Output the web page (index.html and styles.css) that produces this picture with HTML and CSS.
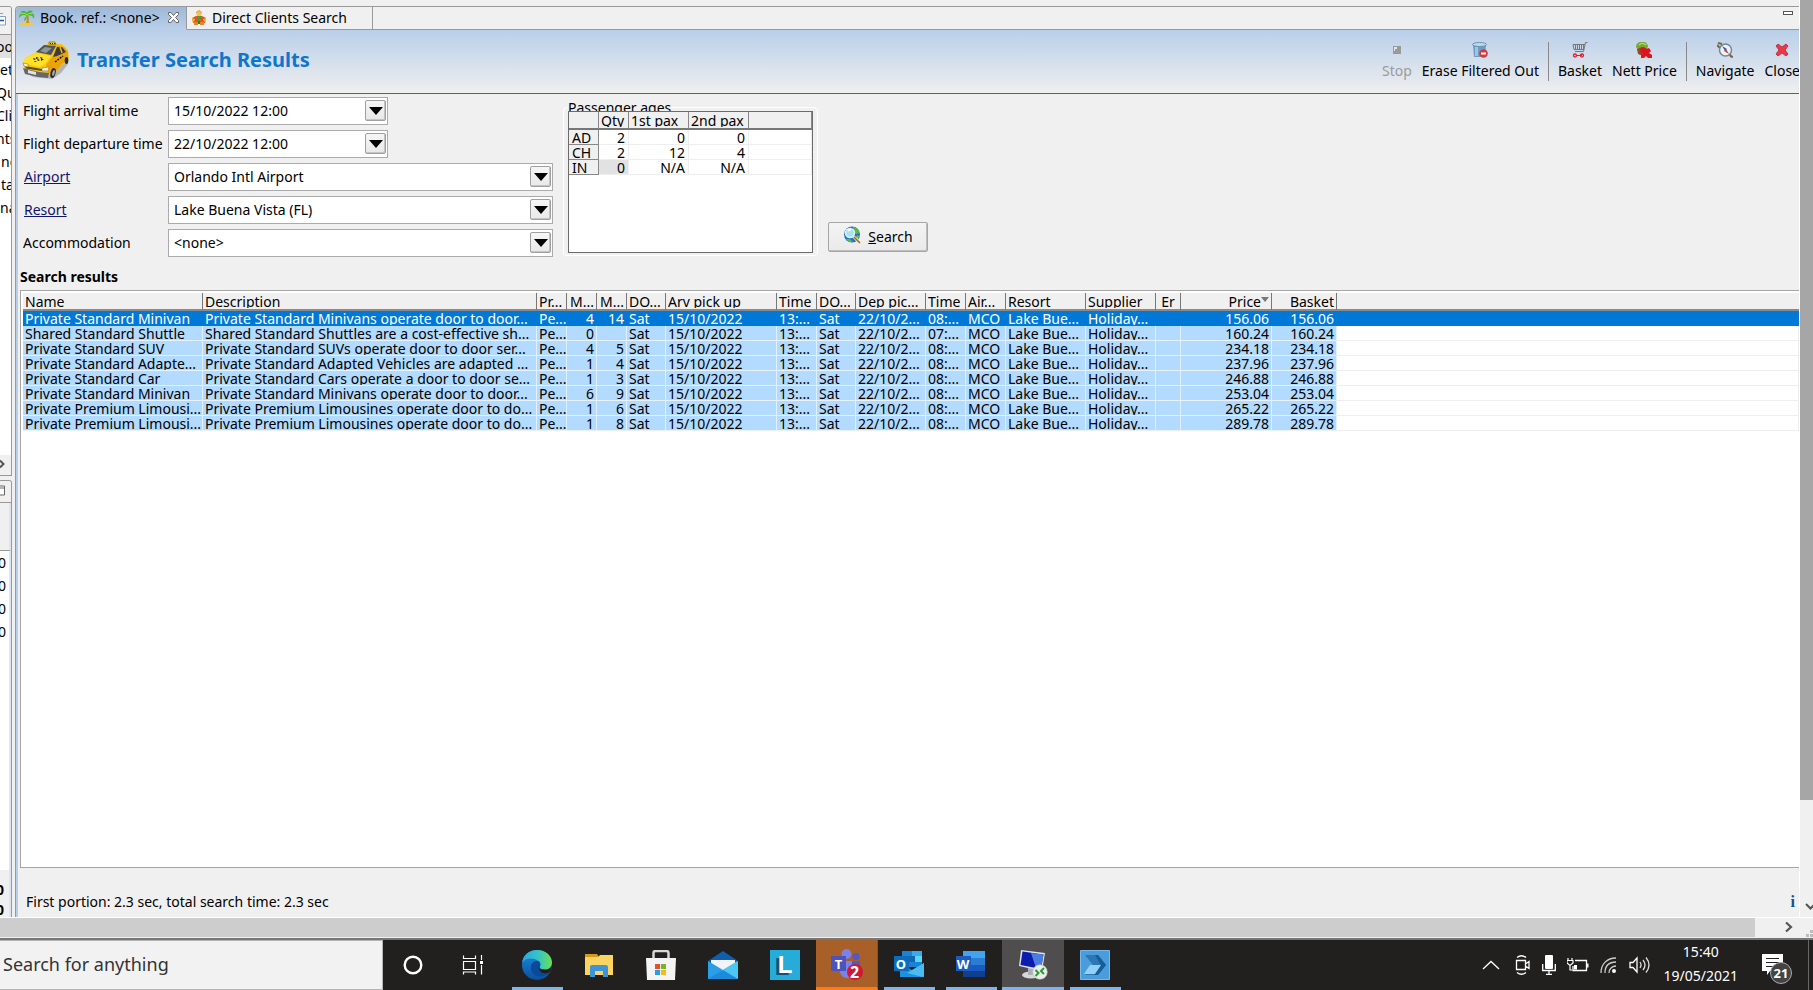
FILE: index.html
```html
<!DOCTYPE html>
<html lang="en">
<head>
<meta charset="utf-8">
<title>Transfer Search Results</title>
<link rel="stylesheet" href="styles.css">
</head>
<body>
<div class="remote">
  <div class="session">
    <aside class="side">
      <section class="side-panel side-top">
        <div class="side-tab"><svg width="7" height="16" viewBox="0 0 7 16"><path d="M0 1.500h3M0 4.500h5.500v8.500H0" fill="#fff" stroke="#7f9fc4"/><path d="M0 8.500h4" stroke="#1c4f9c" stroke-width="1.500"/></svg></div>
        <ul class="side-list">
          <li class="current cut">oo</li><li>ete</li><li class="cut">Qu</li><li class="cut">Cli</li><li class="cut">nts</li><li class="indent">ng</li><li class="indent">ta</li><li>na</li>
        </ul>
        <div class="side-scroll"><svg width="6" height="10" viewBox="0 0 6 10"><path d="M0 1.500 3.500 5 0 8.500" fill="none" stroke="#555" stroke-width="2"/></svg></div>
      </section>
      <section class="side-panel side-bottom">
        <div class="side-tab"><svg width="6" height="12" viewBox="0 0 6 12"><path d="M0 1h4.500v9H0M0 3h4" fill="#fff" stroke="#666"/></svg></div>
        <div class="side-head"></div>
        <ul class="side-nums"><li>0</li><li>0</li><li>0</li><li>0</li></ul>
        <div class="side-totals"><b>0</b><b>0</b></div>
      </section>
    </aside>

    <main class="editor">
      <div class="tabs" role="tablist">
        <button class="tab active" role="tab">
          <svg width="16" height="16" viewBox="0 0 16 16"><ellipse cx="8" cy="14" rx="7" ry="1.800" fill="#f5c93b"/><path d="M7 13c1-3 1-5 .5-7l2 0c.5 3 0 5 .5 7z" fill="#c98b1b"/><path d="M8 6C5 4 2 5 0 8c0-4 2-5 4-5-1-1-2-1-3 0 1-3 5-3 7 0 1-3 4-3 6-1-1 0-2 0-2 1 2 0 4 2 3 6-1-3-4-5-7-3 0 2-1 4-3 5 0-2 1-4 3-5z" fill="#4fb52c"/><path d="M2 4c2-1 4-1 6 1 2-2 4-2 5-1" stroke="#9be35c" fill="none"/></svg>
          <span>Book. ref.: &lt;none&gt;</span>
          <svg class="tab-x" width="11" height="11" viewBox="0 0 11 11"><path d="M.5.5h2.500l2.500 3 2.500-3h2.500v2l-3 3 3 3v2H8l-2.500-3-2.500 3H.5v-2l3-3-3-3z" fill="#fff" stroke="#666"/></svg>
        </button>
        <button class="tab" role="tab">
          <svg width="16" height="16" viewBox="0 0 16 16"><path d="M5 2l3-2 3 2-1 3H6z" fill="#e8a418"/><circle cx="8" cy="4" r="2.500" fill="#f7bd6b"/><path d="M1 8l4-2h6l4 2-1 5H2z" fill="#e2541e"/><path d="M6 6h4l-1 5H7z" fill="#4c9e35"/><path d="M1 8l3 1-1 3-2-1zM15 8l-3 1 1 3 2-1z" fill="#f3b033"/><path d="M3 12h4v3H3zM9 12h4v3H9z" fill="#e3862a"/><path d="M7 11h2v3H7z" fill="#357c2c"/></svg>
          <span>Direct Clients Search</span>
        </button>
        <div class="tab-space"><button class="minimize" aria-label="Minimize"></button></div>
      </div>

      <header class="banner">
        <svg class="taxi" width="48" height="38" viewBox="0 0 48 38">
          <path d="M3 31l8 5 19 2 9-6 7-9-3-1-14 5z" fill="#706f6a" opacity=".4"/>
          <path d="M1 22l2-5 10-5 7-6 7-4 13 1 6 6 1 8-2 5-5 2-5 6-6 5-8-1-15-3-4-4z" fill="#f7c610"/>
          <path d="M3 17l11-5 15 3-6 8-5 3-17-4z" fill="#ffe12a"/>
          <path d="M24 24l7-9 4-11 7 2 4 5 0 8-6 4-8 10-6-1z" fill="#eba30b"/>
          <path d="M14 11l8-7 12 1-5 9z" fill="#4e5559"/><path d="M18 10l5-4 7 1-6 5z" fill="#8d979b"/>
          <path d="M35 6l5 0 4 5-9 4-4 1z" fill="#373d40"/><path d="M38 6l2 6" stroke="#f2b516" stroke-width="1.500"/>
          <path d="M27 1l6 0 1 3-7-1z" fill="#ffe457" stroke="#8c6a12" stroke-width=".8"/><path d="M28 2.500h5" stroke="#222" stroke-dasharray="1 1"/>
          <path d="M1 27l16 4 10 1-1 5-10-1-13-3z" fill="#66696b"/><path d="M3 25l17 3v2L4 27.500z" fill="#5a4a1c"/>
          <path d="M1 22l5 1 0 3-4-1zM20 27l7-1-1 4-6 0z" fill="#f4f4e6" stroke="#a77b0c" stroke-width=".6"/>
          <path d="M6 29l8 2v3l-8-2z" fill="#dfe3e5"/>
          <ellipse cx="31" cy="32" rx="2.500" ry="5" fill="#26282a" transform="rotate(15 31 32)"/><ellipse cx="31.500" cy="32" rx="1.200" ry="3" fill="#a9adb0" transform="rotate(15 31.500 32)"/>
          <ellipse cx="44.500" cy="19.500" rx="1.800" ry="3.500" fill="#26282a"/>
          <path d="M11 17l3 1-2 1zM14 16l3 1-3 1zM15 18l3 1-2 1zM18 16l3 1-2 1zM19 18l3 0-3 2zM12 20l3 0-2 1z" fill="#181818"/><path d="M33 21l8-6" stroke="#181818" stroke-width="1.500" stroke-dasharray="2 1"/>
        </svg>
        <h1>Transfer Search Results</h1>
        <div class="tools">
          <button class="tool" disabled><svg width="16" height="16" viewBox="0 0 16 16"><path d="M4 4h8v8H4z" fill="#9a9a9a"/><path d="M5 5h3v2H6v2H5z" fill="#e4e4e4"/></svg>Stop</button>
          <button class="tool"><svg width="16" height="16" viewBox="0 0 16 16"><path d="M1 2.500h13L13 15H2z" fill="#6e9cc4"/><path d="M3 5h3v9H3z" fill="#9fc4df"/><ellipse cx="7.500" cy="2.500" rx="7" ry="2" fill="#bcd9ec" stroke="#5b84a8" stroke-width=".8"/><circle cx="11.500" cy="11.500" r="4.300" fill="#d33a3c"/><path d="M9 11.500h5" stroke="#fff" stroke-width="1.800"/></svg>Erase Filtered Out</button>
          <i class="sep"></i>
          <button class="tool"><svg width="16" height="16" viewBox="0 0 16 16" fill="none"><path d="M15.500.5h-2l-2 9H3M1 2.500h12M1 2.500l1 5h10M3.500 2.500v5M5.500 2.500v5M7.500 2.500v5M9.500 2.500v5M11.500 2.500v5" stroke="#777"/><path d="M4 13.500h6" stroke="#d22"/><circle cx="3" cy="13.500" r="1.500" stroke="#e0202a" stroke-width="1.300"/><circle cx="10" cy="13.500" r="1.500" stroke="#e0202a" stroke-width="1.300"/></svg>Basket</button>
          <button class="tool"><svg width="16" height="16" viewBox="0 0 16 16"><path d="M0 5c0-3 2-5 5-5h4c2 1 3 3 3 5L9 8H2z" fill="#77a832"/><path d="M3 3c2-2 5-2 7 0" stroke="#b8d76e" fill="none" stroke-width="1.500"/><path d="M1 7l5-2 6 2 0 5-5 2-5-2z" fill="#9b4925"/><path d="M5 6l3-1 2 2 3-1 2 3-2 2 3 2v3h-4l-2-2-2 2H5V13l2-2-3-1z" fill="#dc1420"/></svg>Nett Price</button>
          <i class="sep"></i>
          <button class="tool"><svg width="16" height="16" viewBox="0 0 16 16"><path d="M1 1l4 1M13 14l3 1M0 3l3 3M12 12l3 3" stroke="#7d633e" stroke-width="2"/><circle cx="8.500" cy="8" r="6" fill="#e9f3f9" stroke="#7a8790" stroke-width="1.500"/><path d="M5 4l5 3-2 2z" fill="#2463b4"/><path d="M12 12L7 9l2-2z" fill="#d73b32"/></svg>Navigate</button>
          <button class="tool"><svg width="16" height="16" viewBox="0 0 16 16"><path d="M2 4l2-2 4 3 4-3 2 2-3 4 3 4-2 2-4-3-4 3-2-2 3-4z" fill="#e83a48" stroke="#b9222f" stroke-width=".8"/></svg>Close</button>
        </div>
      </header>

      <form class="criteria" onsubmit="return false">
        <div class="fields">
          <label for="arr">Flight arrival time</label>
          <div class="combo short"><select id="arr"><option>15/10/2022 12:00</option></select><span class="drop"></span></div>
          <label for="dep">Flight departure time</label>
          <div class="combo short"><select id="dep"><option>22/10/2022 12:00</option></select><span class="drop"></span></div>
          <a href="#airport">Airport</a>
          <div class="combo"><select id="airport" aria-label="Airport"><option>Orlando Intl Airport</option></select><span class="drop"></span></div>
          <a href="#resort">Resort</a>
          <div class="combo"><select id="resort" aria-label="Resort"><option>Lake Buena Vista (FL)</option></select><span class="drop"></span></div>
          <label for="acc">Accommodation</label>
          <div class="combo"><select id="acc"><option>&lt;none&gt;</option></select><span class="drop"></span></div>
        </div>
        <div class="pax" role="group" aria-labelledby="pax-title">
          <div class="pax-title" id="pax-title">Passenger ages</div>
          <div class="pax-frame">
            <div class="pax-box">
              <table class="ages">
                <colgroup><col class="w30"><col class="w30"><col class="w60"><col class="w60"><col></colgroup>
                <thead><tr><th></th><th><div>Qty</div></th><th><div>1st pax</div></th><th><div>2nd pax</div></th><th></th></tr></thead>
                <tbody>
                  <tr><th><div>AD</div></th><td><div>2</div></td><td><div>0</div></td><td><div>0</div></td><td></td></tr>
                  <tr><th><div>CH</div></th><td><div>2</div></td><td><div>12</div></td><td><div>4</div></td><td></td></tr>
                  <tr><th><div>IN</div></th><td class="off"><div>0</div></td><td><div>N/A</div></td><td><div>N/A</div></td><td></td></tr>
                </tbody>
              </table>
            </div>
          </div>
        </div>
        <button class="search-btn" type="submit">
          <svg width="18" height="18" viewBox="0 0 18 18"><circle cx="9" cy="8.500" r="8" fill="#1d74c4"/><path d="M10 1c4 0 6 3 6.500 6l-3 1-3-2zM3 13l4 0 3 3c-3 1-6-1-7-3z" fill="#62b544"/><path d="M14 9l2 1-1 4-3 1z" fill="#86bf3b"/><circle cx="7" cy="7" r="4.500" fill="#a8e2ef" stroke="#e2f4fa" stroke-width="1.500"/><path d="M5 5c1-1 2-1 3-1" stroke="#fff" stroke-width="1.500"/><path d="M10.500 10.500l6 6" stroke="#f4e6c5" stroke-width="3"/><path d="M11 11l6 6" stroke="#9a6a2a" stroke-width="1.500"/></svg>
          <span><u>S</u>earch</span>
        </button>
      </form>

      <h2>Search results</h2>
      <section class="results">
        <table class="grid">
          <colgroup><col class="c180"><col class="c334"><col class="w30"><col class="w30"><col class="w30"><col class="c39"><col class="c111"><col class="c40"><col class="c39"><col class="c70"><col class="c40"><col class="c40"><col class="c80"><col class="c70"><col class="c25"><col class="c91"><col class="c65"><col></colgroup>
          <thead><tr><th><div>Name</div></th><th><div>Description</div></th><th><div>Pr...</div></th><th class="n"><div>M...</div></th><th class="n"><div>M...</div></th><th><div>DO...</div></th><th><div>Arv pick up</div></th><th><div>Time</div></th><th><div>DO...</div></th><th><div>Dep pic...</div></th><th><div>Time</div></th><th><div>Air...</div></th><th><div>Resort</div></th><th><div>Supplier</div></th><th class="c"><div>Er</div></th><th class="n sorted"><div>Price<i></i></div></th><th class="n"><div>Basket</div></th><th></th></tr></thead>
          <tbody>
            <tr class="selected"><td><div>Private Standard Minivan</div></td><td><div>Private Standard Minivans operate door to door...</div></td><td><div>Pe...</div></td><td class="n"><div>4</div></td><td class="n"><div>14</div></td><td><div>Sat</div></td><td><div>15/10/2022</div></td><td><div>13:...</div></td><td><div>Sat</div></td><td><div>22/10/2...</div></td><td><div>08:...</div></td><td><div>MCO</div></td><td><div>Lake Bue...</div></td><td><div>Holiday...</div></td><td></td><td class="n"><div>156.06</div></td><td class="n"><div>156.06</div></td><td></td></tr>
            <tr><td><div>Shared Standard Shuttle</div></td><td><div>Shared Standard Shuttles are a cost-effective sh...</div></td><td><div>Pe...</div></td><td class="n"><div>0</div></td><td></td><td><div>Sat</div></td><td><div>15/10/2022</div></td><td><div>13:...</div></td><td><div>Sat</div></td><td><div>22/10/2...</div></td><td><div>07:...</div></td><td><div>MCO</div></td><td><div>Lake Bue...</div></td><td><div>Holiday...</div></td><td></td><td class="n"><div>160.24</div></td><td class="n"><div>160.24</div></td><td></td></tr>
            <tr><td><div>Private Standard SUV</div></td><td><div>Private Standard SUVs operate door to door ser...</div></td><td><div>Pe...</div></td><td class="n"><div>4</div></td><td class="n"><div>5</div></td><td><div>Sat</div></td><td><div>15/10/2022</div></td><td><div>13:...</div></td><td><div>Sat</div></td><td><div>22/10/2...</div></td><td><div>08:...</div></td><td><div>MCO</div></td><td><div>Lake Bue...</div></td><td><div>Holiday...</div></td><td></td><td class="n"><div>234.18</div></td><td class="n"><div>234.18</div></td><td></td></tr>
            <tr><td><div>Private Standard Adapte...</div></td><td><div>Private Standard Adapted Vehicles are adapted ...</div></td><td><div>Pe...</div></td><td class="n"><div>1</div></td><td class="n"><div>4</div></td><td><div>Sat</div></td><td><div>15/10/2022</div></td><td><div>13:...</div></td><td><div>Sat</div></td><td><div>22/10/2...</div></td><td><div>08:...</div></td><td><div>MCO</div></td><td><div>Lake Bue...</div></td><td><div>Holiday...</div></td><td></td><td class="n"><div>237.96</div></td><td class="n"><div>237.96</div></td><td></td></tr>
            <tr><td><div>Private Standard Car</div></td><td><div>Private Standard Cars operate a door to door se...</div></td><td><div>Pe...</div></td><td class="n"><div>1</div></td><td class="n"><div>3</div></td><td><div>Sat</div></td><td><div>15/10/2022</div></td><td><div>13:...</div></td><td><div>Sat</div></td><td><div>22/10/2...</div></td><td><div>08:...</div></td><td><div>MCO</div></td><td><div>Lake Bue...</div></td><td><div>Holiday...</div></td><td></td><td class="n"><div>246.88</div></td><td class="n"><div>246.88</div></td><td></td></tr>
            <tr><td><div>Private Standard Minivan</div></td><td><div>Private Standard Minivans operate door to door...</div></td><td><div>Pe...</div></td><td class="n"><div>6</div></td><td class="n"><div>9</div></td><td><div>Sat</div></td><td><div>15/10/2022</div></td><td><div>13:...</div></td><td><div>Sat</div></td><td><div>22/10/2...</div></td><td><div>08:...</div></td><td><div>MCO</div></td><td><div>Lake Bue...</div></td><td><div>Holiday...</div></td><td></td><td class="n"><div>253.04</div></td><td class="n"><div>253.04</div></td><td></td></tr>
            <tr><td><div>Private Premium Limousi...</div></td><td><div>Private Premium Limousines operate door to do...</div></td><td><div>Pe...</div></td><td class="n"><div>1</div></td><td class="n"><div>6</div></td><td><div>Sat</div></td><td><div>15/10/2022</div></td><td><div>13:...</div></td><td><div>Sat</div></td><td><div>22/10/2...</div></td><td><div>08:...</div></td><td><div>MCO</div></td><td><div>Lake Bue...</div></td><td><div>Holiday...</div></td><td></td><td class="n"><div>265.22</div></td><td class="n"><div>265.22</div></td><td></td></tr>
            <tr><td><div>Private Premium Limousi...</div></td><td><div>Private Premium Limousines operate door to do...</div></td><td><div>Pe...</div></td><td class="n"><div>1</div></td><td class="n"><div>8</div></td><td><div>Sat</div></td><td><div>15/10/2022</div></td><td><div>13:...</div></td><td><div>Sat</div></td><td><div>22/10/2...</div></td><td><div>08:...</div></td><td><div>MCO</div></td><td><div>Lake Bue...</div></td><td><div>Holiday...</div></td><td></td><td class="n"><div>289.78</div></td><td class="n"><div>289.78</div></td><td></td></tr>
          </tbody>
        </table>
      </section>
      <footer class="status"><span>First portion: 2.3 sec, total search time: 2.3 sec</span><b class="info">i</b></footer>
    </main>

    <div class="vbar"><div class="vthumb"></div><svg width="13" height="10" viewBox="0 0 13 10"><path d="M6 2l4.500 4.500L15 2" fill="none" stroke="#555" stroke-width="2"/></svg></div>
  </div>
  <div class="hbar"><div class="hthumb"></div><svg width="10" height="12" viewBox="0 0 10 12"><path d="M2 1.500l5 4.500-5 4.500" fill="none" stroke="#555" stroke-width="2.200"/></svg><svg class="grip" width="8" height="8" viewBox="0 0 8 8"><path d="M0 5h3v3H0zM4 5h3v3H4zM4 1h3v3H4z" fill="#bbb"/></svg></div>
</div>

<nav class="taskbar">
  <input class="find" type="text" aria-label="Search" placeholder="Search for anything">
  <div class="apps">
    <button class="app plain" aria-label="Cortana"><svg width="20" height="20" viewBox="0 0 20 20"><circle cx="10" cy="10" r="8.300" fill="none" stroke="#fff" stroke-width="2.400"/></svg></button>
    <button class="app view" aria-label="Task View"><svg width="22" height="20" viewBox="0 0 22 20"><path d="M1.500.5v3h12v-3M1.500 6.500h12v8h-12zM1.500 19.500v-2.500h12v2.500M19.500 0v5M19.500 10v9.500" fill="none" stroke="#fff" stroke-width="1.200"/><path d="M18 6h3v3h-3z" fill="#fff"/></svg></button>
    <button class="app open" aria-label="Edge"><svg width="30" height="30" viewBox="0 0 30 30"><defs><linearGradient id="e1" x2="1"><stop stop-color="#2ba5e0"/><stop offset=".55" stop-color="#35c6c2"/><stop offset="1" stop-color="#6be04f"/></linearGradient><linearGradient id="e2" y2="1" x2="0"><stop stop-color="#1b8fe0"/><stop offset="1" stop-color="#0c4f9e"/></linearGradient></defs><circle cx="15" cy="15" r="15" fill="url(#e2)"/><path d="M0 13C1 5 7 0 15 0c9 0 15 6 15 12.500 0 4.500-3.500 7-7 7-4 0-5.500-1.500-5-3 1-1.500.8-3-.2-4.500C14 7.500 3 7 0 13z" fill="url(#e1)"/><path d="M17.800 12.500C15 9 8 12 9 19c1 5 5 8 10 7.500 4-.5 7-2 8.500-4-3 2-9 1.500-10.500-2-.8-2 1.300-3 1-5z" fill="#0b4a98"/><path d="M30 15c-1 4-5 5.500-8 4.500-4 0-5.500-1.500-4.500-3.500-2 4 1 7.500 6 7.500 2 0 4-.8 5-2 1-2 1.500-4 1.500-6.500z" fill="#221f1f"/></svg></button>
    <button class="app" aria-label="File Explorer"><svg width="28" height="24" viewBox="0 0 28 24"><path d="M0 1h12l2 3H0z" fill="#d99a1c"/><path d="M0 4h13l2-2h13v20H0z" fill="#fcd462"/><path d="M5 24V14q0-2 2-2h14q2 0 2 2v10h-5v-6h-8v6z" fill="#3b95d8"/></svg></button>
    <button class="app" aria-label="Store"><svg width="30" height="30" viewBox="0 0 30 30"><path d="M7.500 9V3q0-2 2-2h11q2 0 2 2v6" fill="none" stroke="#d8d8d8" stroke-width="2.500"/><path d="M0 8h30l-1 22H1z" fill="#f4f4f4"/><path d="M9 14h5v5H9z" fill="#e8502a"/><path d="M15 14h5v5h-5z" fill="#7ab51d"/><path d="M9 20h5v5H9z" fill="#2a9fe0"/><path d="M15 20h5v5h-5z" fill="#f7b916"/></svg></button>
    <button class="app" aria-label="Mail"><svg width="30" height="28" viewBox="0 0 30 28"><path d="M0 10L15 0l15 10v4H0z" fill="#0f5fae"/><path d="M3 9h24v8L15 21 3 17z" fill="#f3f3f5"/><path d="M0 10l15 9 15-9v18H0z" fill="#2a9fe8"/><path d="M30 10L13 20l17 8z" fill="#4cc7f4"/><path d="M0 28L15 19l15 9z" fill="#1c8bdc"/></svg></button>
    <button class="app" aria-label="Lexicon"><span class="ltile">L</span></button>
    <button class="app teams" aria-label="Teams"><span class="office"><svg width="32" height="32" viewBox="0 0 32 32"><circle cx="15.500" cy="5" r="5" fill="#7b83e8"/><circle cx="25" cy="7.500" r="3.500" fill="#5059c9"/><path d="M9 12h14v10c0 5-3 7-7 7s-7-3-7-7z" fill="#7b83e8"/><path d="M21 12h8v8c0 4-4 6-8 4z" fill="#5059c9"/><path d="M0 7h15v15H0z" fill="#4b53bc"/><circle cx="24" cy="23" r="8" fill="#cf1738"/></svg><span class="letter">T</span><span class="count">2</span></span></button>
    <button class="app open" aria-label="Outlook"><span class="office"><svg width="32" height="32" viewBox="0 0 32 32"><path d="M9 2h20v16H9z" fill="#1a83d6"/><path d="M19 2h10v6H19z" fill="#3aa9ee"/><path d="M16 7h6v6h-6z" fill="#1068b5"/><path d="M22 7h7v6h-7z" fill="#59d6fb"/><path d="M7 14l12 7 12-7v13q0 1-1 1H7z" fill="#1d91dd"/><path d="M31 14L14 24l16 4q1 0 1-1z" fill="#49bdf0"/><path d="M1 7h15v15H1z" fill="#0f6cbd"/></svg><span class="letter">O</span></span></button>
    <button class="app open" aria-label="Word"><span class="office"><svg width="32" height="32" viewBox="0 0 32 32"><path d="M8 2h22v7H8z" fill="#41a5ee"/><path d="M8 9h22v7H8z" fill="#2b7cd3"/><path d="M8 16h22v6H8z" fill="#185abd"/><path d="M8 22h22v6H8z" fill="#103f91"/><path d="M1 7h15v15H1z" fill="#1b5cbe"/></svg><span class="letter">W</span></span></button>
    <button class="app open current" aria-label="Remote Desktop"><svg width="30" height="30" viewBox="0 0 30 30"><ellipse cx="13" cy="25" rx="9" ry="3.500" fill="#d6d8da"/><path d="M10 18h6v7h-6z" fill="#aab0b5"/><path d="M3 0l24 3-3 18L1 16z" fill="#dfe2e5"/><path d="M4.500 1.500l21 3-2.500 14.500L2.500 15z" fill="#0c1cae"/><path d="M13 3l12.500 1.500L23 19l-5-1z" fill="#4b7ce0"/><circle cx="22" cy="22" r="7.300" fill="#eceeed" stroke="#bbb" stroke-width=".6"/><path d="M17.500 20l3 3-3 3M26 18l-3 3 3 3" fill="none" stroke="#2c9b34" stroke-width="2"/></svg></button>
    <button class="app open" aria-label="Power Automate"><svg width="30" height="30" viewBox="0 0 30 30"><path d="M.5.5h29v29H.5z" fill="#4b9cdb" stroke="#79baea"/><path d="M5 5h13l8 10-8 10H5l8-10z" fill="#2d77b5"/><path d="M18 5l8 10-8 10H14l7-10-6-10z" fill="#155e97"/><path d="M10 15h11l-6 9H4z" fill="#93d0f5"/></svg></button>
  </div>
  <div class="tray">
    <svg class="more" width="18" height="10" viewBox="0 0 18 10"><path d="M1 9l8-7.500L17 9" fill="none" stroke="#fff" stroke-width="1.300"/></svg>
    <svg width="16" height="20" viewBox="0 0 16 20"><path d="M1.500 5.500h9v9h-9zM10.500 9l3.500-2.500v7L10.500 11M2 2.500q4.500-3.500 9 0M2 17.500q4.500 3.500 9 0" fill="none" stroke="#fff" stroke-width="1.300"/></svg>
    <svg width="14" height="20" viewBox="0 0 14 20"><rect x="3" y="0" width="8" height="14" rx="1" fill="#fff"/><path d="M.7 9v6.500h12.600V9M7 15v4M4 19.300h6" fill="none" stroke="#fff" stroke-width="1.300"/></svg>
    <svg width="22" height="16" viewBox="0 0 22 16"><path d="M8 3.500h11.500v10H6V9" fill="none" stroke="#fff" stroke-width="1.300"/><path d="M20 6.500h1.500v4H20zM7 8h3v4.500H7z" fill="#fff"/><path d="M1 1v2M5 1v2M0 3.500h6V6L3 8.500 0 6zM3 8v5h2" fill="none" stroke="#fff" stroke-width="1.200"/></svg>
    <svg width="18" height="18" viewBox="0 0 18 18"><path d="M1 17C1 8 7 2 16 2M5 17C5 10 9 6 16 6M9 17c0-4 3-7 7-7" fill="none" stroke="#ccc" stroke-width="1.300"/><circle cx="14" cy="15" r="2" fill="#fff"/></svg>
    <svg width="22" height="18" viewBox="0 0 22 18"><path d="M1 6.500h3l4-4.500v14l-4-4.500H1z" fill="none" stroke="#fff" stroke-width="1.300"/><path d="M11 6q2 3 0 6M14 4q4 5 0 10M17 1.500q6 7.500 0 15" fill="none" stroke="#ddd" stroke-width="1.300"/></svg>
    <div class="clock"><span>15:40</span><span>19/05/2021</span></div>
    <button class="notes" aria-label="Notifications"><svg width="22" height="22" viewBox="0 0 22 22"><path d="M0 0h21v17H8l-3 4v-4H0z" fill="#fff"/><path d="M4 4.500h13M4 8.500h13M4 12.500h7" stroke="#222" stroke-width="1.200"/></svg><span class="badge">21</span></button>
    <i class="peek"></i>
  </div>
</nav>
</body>
</html>
```
FILE: styles.css
```css
* { box-sizing: border-box; }
body {
  margin: 0;
  height: 100vh;
  display: flex;
  flex-direction: column;
  overflow: hidden;
  background: #f0f0f0;
  color: #000;
  font: 14px/20px "Noto Sans", "Liberation Sans", sans-serif;
}
button, select, input { font: inherit; color: inherit; margin: 0; padding: 0; border: 0; border-radius: 0; background: none; }
h1, h2, ul { margin: 0; padding: 0; }
li { list-style: none; }
svg { display: block; flex: none; }

.remote { flex: 1; min-height: 0; display: flex; flex-direction: column; }
.session { flex: 1; min-height: 0; display: flex; }

/* sliver of the left-hand views */
.side { width: 12px; flex: none; display: flex; flex-direction: column; gap: 4px; padding-top: 6px; overflow: hidden; }
.side-panel { display: flex; flex-direction: column; border: 1px solid #999; border-left: 0; background: #fff; overflow: hidden; }
.side-top { height: 470px; flex: none; border-top-right-radius: 3px; }
.side-bottom { flex: 1; border-bottom: 0; border-top-right-radius: 3px; }
.side-tab { height: 28px; flex: none; padding-top: 5px; background: #f0f0f0; border-bottom: 1px solid #999; }
.side-bottom .side-tab { height: 22px; padding-top: 4px; }
.side-list { flex: 1; line-height: 23px; }
.side-list li { height: 23px; overflow: hidden; }
.side-list .cut { text-indent: -4px; }
.side-list .indent { padding-left: 1px; }
.side-list .current { background: #e0e0e0; }
.side-scroll { height: 20px; padding-top: 4px; background: #f0f0f0; }
.side-head, .side-nums, .side-totals { border-right: 2px solid #dce6f2; }
.side-head { height: 48px; flex: none; background: #f0f0f0; border-bottom: 1px solid #999; }
.side-nums { flex: 1; line-height: 23px; }
.side-nums li { text-indent: -2px; }
.side-totals { height: 47px; padding-top: 10px; background: #f0f0f0; line-height: 20px; overflow: hidden; }
.side-totals b { display: block; text-indent: -4px; }

/* editor */
.editor {
  flex: 1;
  min-width: 0;
  display: flex;
  flex-direction: column;
  margin: 6px 0 0 3px;
  border: 1px solid #999;
  border-width: 1px 0 0 1px;
  border-top-left-radius: 4px;
  box-shadow: inset 2px 0 #b9cfe7;
  overflow: hidden;
  padding-left: 2px;
}
.tabs { display: flex; height: 23px; flex: none; margin-left: -2px; }
.tab { display: flex; align-items: center; gap: 5px; width: 186px; padding: 0 4px; border: 1px solid #999; border-width: 0 1px 1px 0; white-space: nowrap; }
.tab.active { width: 171px; padding-left: 3px; background: linear-gradient(#9db8d8, #b9cfe9); border-bottom-color: #b9cfe9; border-top-left-radius: 4px; }
.tab-x { margin: 0 0 2px 3px; }
.tab-space { flex: 1; display: flex; justify-content: flex-end; border-bottom: 1px solid #999; }
.minimize { width: 10px; height: 4px; margin: 4px 6px 0 0; border: 1px solid #555; background: #fff; }

.banner { display: flex; align-items: center; height: 64px; flex: none; padding-left: 6px; background: linear-gradient(#b9cfe9, #efefef); border-bottom: 1px solid #2a6fa5; margin-left: -2px; white-space: nowrap; }
.taxi { margin-bottom: 3px; }
h1 { flex: 1; margin: 0 0 3px 7px; color: #0f76cc; font: bold 20px/28px "Noto Sans", "Liberation Sans", sans-serif; }
.tools { display: flex; align-items: center; margin-right: -6px; }
.tool { display: flex; flex-direction: column; align-items: center; gap: 3px; padding: 0 5px; }
.tool:disabled { color: #9b9b9b; }
.sep { width: 1px; height: 39px; margin: 0 4px; background: #888; }

/* search criteria */
.criteria { display: flex; flex: none; height: 170px; padding: 3px 0 0 5px; }
.fields { display: grid; grid-template-columns: 145px 385px; grid-auto-rows: 28px; row-gap: 5px; align-items: center; align-content: start; white-space: nowrap; }
.fields a { color: #14146e; justify-self: start; padding-left: 1px; }
.combo { display: grid; grid-template-columns: 1fr 25px; height: 28px; border: 1px solid #ababab; background: #fff; }
.combo.short { width: 220px; }
.combo select { grid-area: 1 / 1 / 2 / 3; appearance: none; width: 100%; padding-left: 5px; outline: 0; }
.drop { grid-area: 1 / 2; width: 21px; height: 21px; margin: 2px 0 0 3px; display: grid; place-items: center; border: 1px solid #a0a0a0; border-radius: 2px; background: linear-gradient(#f6f6f6, #e8e8e8); box-shadow: inset -1px -1px #c4c4c4; pointer-events: none; }
.drop::after { content: ""; border: 7px solid transparent; border-top: 8px solid #000; border-bottom: 0; }

.pax { width: 255px; margin-left: 10px; }
.pax-title { position: relative; z-index: 1; width: fit-content; height: 13px; margin: 1px 0 -4px 5px; line-height: 20px; background: #f0f0f0; overflow: hidden; }
.pax-frame { height: 149px; padding: 3px 4px 4px; border: 1px solid #fff; border-radius: 4px; }
.pax-box { height: 142px; border: 1px solid #6b6b6b; background: #fff; }
table { table-layout: fixed; border-collapse: separate; border-spacing: 0; width: 100%; white-space: nowrap; }
th, td { padding: 0; font-weight: normal; text-align: left; vertical-align: top; }
th div, td div { overflow: hidden; line-height: 15px; height: 14px; padding: 0 3px; }
.ages tr { height: 15px; }
.ages thead tr { height: 18px; }
.ages th { background: #f0f0f0; border: 1px solid #888; border-width: 0 1px 1px 0; }
.ages thead th { border-bottom: 2px solid #777; }
.ages thead div, .grid thead div { height: 15px; margin-bottom: 1px; padding: 0 2px; line-height: 18px; }
.ages td { text-align: right; border: 1px solid #eee; border-width: 0 1px 1px 0; }
.ages .off { background: #e2e2e2; }
.w30 { width: 30px; }
.w60 { width: 60px; }

.search-btn { display: flex; align-items: center; justify-content: center; gap: 7px; width: 100px; height: 30px; margin: 125px 0 0 10px; border: 1px solid #a6a6a6; border-radius: 2px; background: linear-gradient(#f3f3f3, #eaeaea); box-shadow: inset -1px -1px #bdbdbd; }
.search-btn svg { margin-bottom: 4px; }

h2 { height: 26px; flex: none; padding: 3px 0 0 2px; font: bold 14px/20px "Noto Sans", sans-serif; }
.results { flex: 1; min-height: 0; margin-left: 2px; padding: 2px 0 0 2px; border: 1px solid #a5a5a5; border-right: 0; background: #fff; overflow: hidden; }
.grid thead tr { height: 18px; }
.grid thead th { background: #f0f0f0; border-right: 1px solid #777; border-bottom: 2px solid #8a8a8a; }
.grid thead th:last-child { border-right: 0; }
.grid td { height: 15px; background: #b3dbff; border-right: 1px solid #dff0ff; border-bottom: 1px solid #e6f2fc; }
.grid td div { padding: 0 2px; }
.grid td:last-child { background: #fff; border-color: #eee; }
.grid .selected td, .grid .selected td:last-child { background: #0078d7; color: #fff; border-color: #0078d7; }
.grid .n { text-align: right; }
.grid .c { text-align: center; }
.sorted i { display: inline-block; vertical-align: 5px; border: 4px solid transparent; border-top: 5px solid #777; border-bottom: 0; }
.c180 { width: 180px; }
.c334 { width: 334px; }
.c39 { width: 39px; }
.c111 { width: 111px; }
.c40 { width: 40px; }
.c70 { width: 70px; }
.c80 { width: 80px; }
.c25 { width: 25px; }
.c91 { width: 91px; }
.c65 { width: 65px; }

.status { display: flex; align-items: center; justify-content: space-between; height: 49px; flex: none; padding: 19px 4px 0 8px; }
.info { color: #14508c; font: bold 16px/20px "Liberation Serif", serif; }

.vbar { width: 14px; flex: none; display: flex; flex-direction: column; border-left: 1px solid #fff; }
.vthumb { flex: 1; margin-bottom: 102px; background: #a6a6a6; }
.vbar svg { margin-bottom: 5px; }
.hbar { display: flex; align-items: flex-start; height: 23px; flex: none; border-top: 1px solid #fff; border-bottom: 2px solid #777; }
.hthumb { flex: 1; height: 19px; background: #cdcdcd; }
.hbar svg { margin: 3px 12px 0 29px; }
.hbar .grip { margin: 11px -1px 0 0; }

/* taskbar */
.taskbar { display: flex; height: 50px; flex: none; background: #221f1f; color: #fff; }
.find { width: 383px; height: 50px; padding: 0 0 2px 3px; border: 1px solid #b5b5b5; border-left: 0; background: #f2f2f2; color: #333; font-size: 18px; }
.find::placeholder { color: #333; opacity: 1; }
.apps { display: flex; flex: 1; }
.app { width: 62px; display: grid; place-items: center; }
.app.plain { width: 60px; }
.app.view { width: 63px; padding-right: 3px; }
.open { background: linear-gradient(#7db4ea, #7db4ea) 50% 100% / 51px 3px no-repeat; }
.open.current { background-color: #4f4d4d; background-size: 100% 3px; }
.teams { background: #a85f28; border-bottom: 3px solid #ff7a0f; border-right: 1px solid #8e5022; padding-top: 3px; }
.ltile { width: 30px; height: 30px; background: #25acd8; font: bold 24px/30px "Liberation Sans", sans-serif; text-shadow: -3px 2px #14507c; }
.office { display: grid; width: 32px; height: 32px; }
.office svg, .office .letter, .office .count { grid-area: 1 / 1; }
.letter { width: 16px; margin-top: 5px; font: bold 13px/20px "Noto Sans", sans-serif; text-align: center; }
.count { width: 48px; margin-top: 13px; font: bold 16px/20px "Noto Sans", sans-serif; text-align: center; }
.tray { display: flex; align-items: center; gap: 11px; }
.more { margin-right: 4px; }
.clock { display: flex; flex-direction: column; align-items: center; gap: 4px; margin: 0 0 2px 2px; }
.notes { position: relative; margin: 0 13px 0 13px; }
.badge { position: absolute; left: 8px; top: 8px; width: 22px; height: 22px; border: 1px solid #aaa; border-radius: 50%; background: #444; font: bold 13px/20px "Noto Sans", sans-serif; text-align: center; }
.peek { width: 5px; height: 50px; border-left: 1px solid #666; }
```
